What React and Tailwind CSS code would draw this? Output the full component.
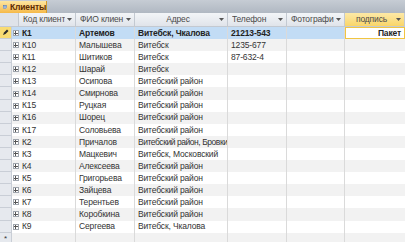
import React from 'react';

const rows = [
  ['К1', 'Артемов', 'Витебск, Чкалова', '21213-543'],
  ['К10', 'Малышева', 'Витебск', '1235-677'],
  ['К11', 'Шитиков', 'Витебск', '87-632-4'],
  ['К12', 'Шарай', 'Витебск', ''],
  ['К13', 'Осипова', 'Витебский район', ''],
  ['К14', 'Смирнова', 'Витебский район', ''],
  ['К15', 'Руцкая', 'Витебский район', ''],
  ['К16', 'Шорец', 'Витебский район', ''],
  ['К17', 'Соловьева', 'Витебский район', ''],
  ['К2', 'Причалов', 'Витебский район, Бровки', ''],
  ['К3', 'Мацкевич', 'Витебск, Московский', ''],
  ['К4', 'Алексеева', 'Витебский район', ''],
  ['К5', 'Григорьева', 'Витебский район', ''],
  ['К6', 'Зайцева', 'Витебский район', ''],
  ['К7', 'Терентьев', 'Витебский район', ''],
  ['К8', 'Коробкина', 'Витебский район', ''],
  ['К9', 'Сергеева', 'Витебск, Чкалова', ''],
];

const Arrow = () => (
  <svg width="5" height="3" viewBox="0 0 5 3" className="shrink-0">
    <path d="M0 0h5L2.5 3z" fill="#555" />
  </svg>
);

const HeadCell = ({ w, label, center, active }) => (
  <div
    className={`flex items-center h-full pl-[4px] pr-[3px] gap-[2px] border-r border-[#c3c9d1] ${w} ${
      active ? 'bg-gradient-to-b from-[#fde9a6] to-[#f9d568]' : ''
    }`}
  >
    <span className={`flex-1 overflow-hidden whitespace-nowrap ${center ? 'text-center' : ''}`}>{label}</span>
    <Arrow />
  </div>
);

const Expand = () => (
  <div className="w-[6px] h-[6px] border border-[#a0a6ae] bg-white flex items-center justify-center relative">
    <div className="absolute w-[4px] h-px bg-[#555]" />
    <div className="absolute w-px h-[4px] bg-[#555]" />
  </div>
);

const TableIcon = () => (
  <svg width="10" height="8" viewBox="0 0 10 8">
    <rect x="0.5" y="0.5" width="9" height="7" fill="#fff" stroke="#3b6cb4" />
    <rect x="0.5" y="0.5" width="9" height="2" fill="#3b6cb4" />
    <path d="M3.5 2.5v5M6.5 2.5v5M0.5 5h9" stroke="#3b6cb4" strokeWidth="0.8" />
  </svg>
);

const Pencil = () => (
  <svg width="7" height="7" viewBox="0 0 7 7">
    <path d="M1 6l1-2.5L5 0.5l1.5 1.5-3 3z" fill="#2b2b2b" />
  </svg>
);

export default function App() {
  return (
    <div
      className="w-[405px] h-[242px] overflow-hidden bg-white text-[8.5px] tracking-[-0.15px] text-[#333] leading-none"
      style={{ fontFamily: '"Liberation Sans", Arial, sans-serif' }}
    >
      <div className="h-[13px] bg-gradient-to-b from-[#c6ccd4] to-[#b0b8c2] flex items-end">
        <div className="h-[12px] w-[47px] flex items-center gap-[3px] pl-[3px] bg-gradient-to-b from-[#fde6a0] to-[#f5b947] border-r border-[#d49a2c] font-bold text-[#5a2a05]">
          <TableIcon />
          <span>Клиенты</span>
        </div>
      </div>

      <div className="h-[14px] flex bg-gradient-to-b from-[#f3f5f8] to-[#e0e4ea] border-b border-[#c3c9d1] text-[#4a4a4a]">
        <div className="w-[19px] h-full bg-[#dfe3e9] border-r border-[#c3c9d1]" />
        <HeadCell w="w-[57px]" label="Код клиент" />
        <HeadCell w="w-[59px]" label="ФИО клиен" />
        <HeadCell w="w-[93px]" label="Адрес" center />
        <HeadCell w="w-[59px]" label="Телефон" />
        <HeadCell w="w-[58px]" label="Фотографи" />
        <HeadCell w="w-[60px]" label="подпись" center active />
      </div>

      {rows.map((r, i) => {
        const sel = i === 0;
        const bg = sel ? 'bg-[#c2dcf5]' : i % 2 ? 'bg-[#f2f2f2]' : 'bg-white';
        const long = r[2].length > 20;
        return (
          <div key={r[0]} className={`h-[12.1px] flex items-center ${sel ? 'font-bold text-[#222]' : ''}`}>
            <div
              className={`w-[12px] h-full flex items-center justify-center border-r border-b border-[#c9ced6] ${
                sel ? 'bg-[#f9dc73]' : 'bg-[#e6e9ee]'
              }`}
            >
              {sel && <Pencil />}
            </div>
            <div className={`w-[7px] h-full flex items-center justify-center ${bg}`}>
              <Expand />
            </div>
            <div className={`w-[57px] h-full flex items-center pl-[3px] border-r border-[#dadada] ${bg}`}>{r[0]}</div>
            <div className={`w-[59px] h-full flex items-center pl-[3px] border-r border-[#dadada] ${bg}`}>{r[1]}</div>
            <div
              className={`w-[93px] h-full flex items-center pl-[3px] border-r border-[#dadada] whitespace-nowrap overflow-hidden ${bg} ${
                long ? 'tracking-[-0.45px]' : ''
              }`}
            >
              {r[2]}
            </div>
            <div className={`w-[59px] h-full flex items-center pl-[3px] border-r border-[#dadada] ${bg}`}>{r[3]}</div>
            <div className={`w-[58px] h-full border-r border-[#dadada] ${bg}`} />
            {sel ? (
              <div className="w-[60px] h-full flex items-center justify-end pr-[3px] bg-white border border-[#f1c542]">Пакет</div>
            ) : (
              <div className={`w-[60px] h-full ${bg}`} />
            )}
          </div>
        );
      })}

      <div className="h-[12px] flex items-center bg-[#f2f2f2]">
        <div className="w-[12px] h-full flex items-center justify-center bg-[#e6e9ee] border-r border-[#c9ced6] text-[8px]">*</div>
        <div className="w-[7px] h-full" />
        <div className="w-[57px] h-full border-r border-[#dadada]" />
        <div className="w-[59px] h-full border-r border-[#dadada]" />
        <div className="w-[93px] h-full border-r border-[#dadada]" />
        <div className="w-[59px] h-full border-r border-[#dadada]" />
        <div className="w-[58px] h-full border-r border-[#dadada]" />
      </div>
    </div>
  );
}
